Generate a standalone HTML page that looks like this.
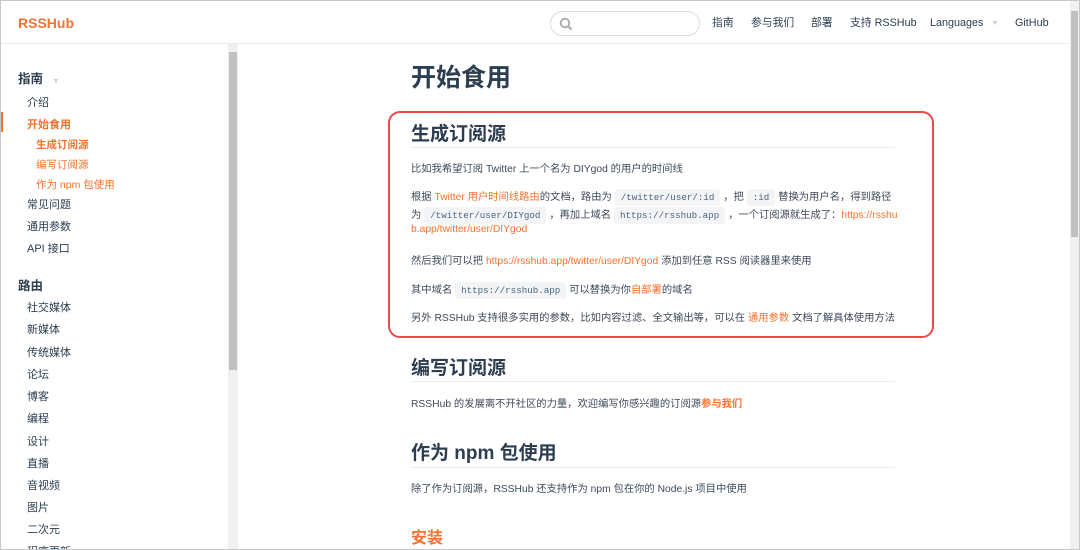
<!DOCTYPE html>
<html><head><meta charset="utf-8"><style>
*{margin:0;padding:0;box-sizing:border-box}
body{width:1080px;height:550px;overflow:hidden;background:#fff;font-family:"Liberation Sans","Noto Sans CJK SC",sans-serif;color:#2c3e50;position:relative}
.frame{position:absolute;left:0;top:0;width:1080px;height:550px;border:1px solid #c8c8c8;pointer-events:none;z-index:9}
.hdr{position:absolute;left:0;top:0;width:1070px;height:44px;border-bottom:1px solid #eaecef}
.logo{position:absolute;left:18px;top:15px;font-size:14px;font-weight:bold;color:#f5712c}
.search{position:absolute;left:550px;top:11px;width:150px;height:25px;border:1px solid #ddd;border-radius:13px}
.nav{position:absolute;top:16px;font-size:10.8px;line-height:14px;color:#2c3e50;white-space:nowrap}
.side{position:absolute;left:0;top:44px;width:228px;height:506px;overflow:hidden}
.side div{position:absolute;font-size:11px;color:#2c3e50;white-space:nowrap}
.side .g{font-size:12.5px;font-weight:bold;left:18px}
.side .i{left:27px}
.side .s{left:36px;font-size:10.5px;color:#f5712c}
.sb{position:absolute;background:#f0f0f0}
.th{position:absolute;background:#c1c1c1}
.m{position:absolute;white-space:nowrap;font-size:10.3px;color:#3d4a5a}
.o{color:#f5712c}
code{font-family:"Liberation Mono",monospace;font-size:9.2px;background:#f3f4f5;padding:3px 6px;border-radius:3px;color:#476582}
h1,h2{position:absolute;white-space:nowrap;color:#2c3e50;font-weight:bold}
.ul{position:absolute;height:1px;background:#eaecef;width:484px}
</style></head><body>
<div class="hdr">
<div class="logo">RSSHub</div>
<div class="search"><svg width="14" height="14" style="position:absolute;left:8px;top:5px" viewBox="0 0 14 14"><circle cx="6" cy="6" r="4.3" fill="none" stroke="#aaa" stroke-width="1.8"/><path d="M9.2 9.2L12.5 12.5" stroke="#aaa" stroke-width="2"/></svg></div>
<div class="nav" style="left:712px">指南</div>
<div class="nav" style="left:751px">参与我们</div>
<div class="nav" style="left:811px">部署</div>
<div class="nav" style="left:850px">支持 RSSHub</div>
<div class="nav" style="left:930px">Languages<span style="color:#ccc;font-size:7px;margin-left:8px;vertical-align:1px">▼</span></div>
<div class="nav" style="left:1015px">GitHub</div>
</div>
<div class="side">
<div class="g" style="top:24px">指南 <span style="color:#ccc;font-size:7px;margin-left:6px;font-weight:normal">▼</span></div>
<div class="i" style="top:50px">介绍</div>
<div style="left:0;top:68px;width:3px;height:20px;background:#f5712c"></div>
<div class="i" style="top:72px;color:#f5712c;font-weight:bold">开始食用</div>
<div class="s" style="top:93px;font-weight:bold">生成订阅源</div>
<div class="s" style="top:113px">编写订阅源</div>
<div class="s" style="top:133px">作为 npm 包使用</div>
<div class="i" style="top:152px">常见问题</div>
<div class="i" style="top:174px">通用参数</div>
<div class="i" style="top:196px">API 接口</div>
<div class="g" style="top:231px">路由</div>
<div class="i" style="top:255px">社交媒体</div>
<div class="i" style="top:277px">新媒体</div>
<div class="i" style="top:300px">传统媒体</div>
<div class="i" style="top:322px">论坛</div>
<div class="i" style="top:344px">博客</div>
<div class="i" style="top:366px">编程</div>
<div class="i" style="top:389px">设计</div>
<div class="i" style="top:411px">直播</div>
<div class="i" style="top:433px">音视频</div>
<div class="i" style="top:455px">图片</div>
<div class="i" style="top:477px">二次元</div>
<div class="i" style="top:499px">程序更新</div>
</div>
<div class="sb" style="left:228px;top:44px;width:10px;height:506px"></div>
<div class="th" style="left:229px;top:52px;width:8px;height:318px"></div>
<div class="sb" style="left:1070px;top:0;width:10px;height:550px"></div>
<div class="th" style="left:1071px;top:11px;width:7px;height:226px"></div>

<h1 style="left:411px;top:58px;font-size:25px">开始食用</h1>
<div style="position:absolute;left:388px;top:111px;width:546px;height:227px;border:2px solid #f04848;border-radius:12px"></div>
<h2 style="left:411px;top:119px;font-size:19px">生成订阅源</h2>
<div class="ul" style="left:411px;top:147px"></div>
<div class="m" style="left:411px;top:160px">比如我希望订阅 Twitter 上一个名为 DIYgod 的用户的时间线</div>
<div class="m" style="left:411px;top:188px">根据 <span class="o">Twitter 用户时间线路由</span>的文档，路由为 <code>/twitter/user/:id</code> ，把 <code>:id</code> 替换为用户名，得到路径</div>
<div class="m" style="left:411px;top:206px">为 <code>/twitter/user/DIYgod</code> ，再加上域名 <code>https://rsshub.app</code> ，一个订阅源就生成了：<span class="o">https://rsshu</span></div>
<div class="m o" style="left:411px;top:224px">b.app/twitter/user/DIYgod</div>
<div class="m" style="left:411px;top:252px">然后我们可以把 <span class="o">https://rsshub.app/twitter/user/DIYgod</span> 添加到任意 RSS 阅读器里来使用</div>
<div class="m" style="left:411px;top:281px">其中域名 <code>https://rsshub.app</code> 可以替换为你<span class="o">自部署</span>的域名</div>
<div class="m" style="left:411px;top:309px">另外 RSSHub 支持很多实用的参数，比如内容过滤、全文输出等，可以在 <span class="o">通用参数</span> 文档了解具体使用方法</div>

<h2 style="left:411px;top:353px;font-size:19px">编写订阅源</h2>
<div class="ul" style="left:411px;top:381px"></div>
<div class="m" style="left:411px;top:395px">RSSHub 的发展离不开社区的力量，欢迎编写你感兴趣的订阅源<span class="o" style="font-weight:bold">参与我们</span></div>
<h2 style="left:411px;top:438px;font-size:19px">作为 npm 包使用</h2>
<div class="ul" style="left:411px;top:467px"></div>
<div class="m" style="left:411px;top:480px">除了作为订阅源，RSSHub 还支持作为 npm 包在你的 Node.js 项目中使用</div>
<h2 style="left:411px;top:524px;font-size:16px;color:#f5712c">安装</h2>
<div class="frame"></div>
</body></html>
